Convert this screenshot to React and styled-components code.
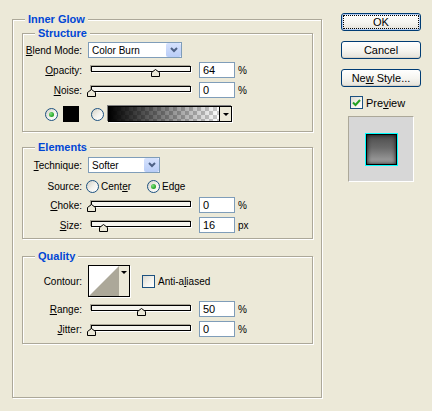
import styled, { createGlobalStyle } from 'styled-components';

const GlobalStyle = createGlobalStyle`
  html, body {
    margin: 0;
    background: #ece9d8;
  }
  body {
    font-family: "Liberation Sans", Arial, sans-serif;
    font-size: 10px;
    color: #000;
  }
`;

const Dialog = styled.div`
  display: flex;
  align-items: flex-start;
  width: 432px;
  height: 411px;
  box-sizing: border-box;
  padding: 13px 0 0 12px;
`;

const Group = styled.fieldset`
  margin: ${p => p.$mt || 0}px 0 0;
  padding: ${p => p.$pad};
  width: ${p => (p.$w ? `${p.$w}px` : 'auto')};
  height: ${p => (p.$h ? `${p.$h}px` : 'auto')};
  box-sizing: border-box;
  min-width: 0;
  border: 1px solid #aca899;
  box-shadow: inset 1px 1px 0 #fff, 1px 1px 0 #fff;
`;

const Legend = styled.legend`
  margin-left: ${p => p.$offset}px;
  padding: 0 3px;
  font-size: 11px;
  font-weight: bold;
  line-height: 13px;
  color: #0046d5;
  background: #ece9d8;
`;

const Row = styled.div`
  display: flex;
  align-items: ${p => p.$align || 'center'};
  height: ${p => p.$h || 16}px;
  margin-top: ${p => p.$gap || 0}px;
`;

const Label = styled.span`
  flex: none;
  width: 59px;
  margin-right: ${p => p.$gap ?? 6}px;
  text-align: right;
  white-space: nowrap;
`;

const Select = styled.div`
  display: flex;
  align-items: center;
  justify-content: space-between;
  width: ${p => p.$w}px;
  height: 16px;
  box-sizing: border-box;
  padding-left: 3px;
  border: 1px solid #7f9db9;
  background: #fff;
`;

const SelectButton = styled.span`
  display: flex;
  align-items: center;
  justify-content: center;
  width: 15px;
  height: 14px;
  border-radius: 2px;
  background: linear-gradient(#d6e2fd, #b9cdf7);
`;

const Slider = styled.div`
  position: relative;
  flex: none;
  width: 106px;
  height: 16px;
`;

const Track = styled.div`
  margin: 4px 3px 0;
  height: 6px;
  box-sizing: border-box;
  border: 1px solid #000;
  background: #f6f5ef;
  box-shadow: -1px -1px 0 #aca899, 1px 1px 0 #fff;
`;

const Thumb = styled.svg`
  position: absolute;
  top: 7px;
`;

const NumberInput = styled.input`
  width: 36px;
  height: 16px;
  box-sizing: border-box;
  margin: 0 0 0 5px;
  padding: 0 0 0 3px;
  border: 1px solid #7f9db9;
  background: #fff;
  font: 11px "Liberation Sans", Arial, sans-serif;
  color: #000;
  outline: none;
`;

const Unit = styled.span`
  margin-left: 3px;
`;

const Radio = styled.span`
  display: flex;
  align-items: center;
  justify-content: center;
  flex: none;
  width: 13px;
  height: 13px;
  box-sizing: border-box;
  margin-left: ${p => p.$ml || 0}px;
  border: 1px solid #1c5180;
  border-radius: 50%;
  background: linear-gradient(135deg, #d4d1c6, #f4f3ee 55%, #fff);

  &::after {
    content: '';
    width: 5px;
    height: 5px;
    border-radius: 50%;
    background: ${p => (p.$checked ? 'radial-gradient(circle at 35% 35%, #7fe07f, #21a121 70%)' : 'transparent')};
  }
`;

const OptionText = styled.span`
  margin-left: ${p => p.$ml ?? 2}px;
  font-size: ${p => p.$size || 10}px;
  white-space: nowrap;
`;

const CheckBox = styled.span`
  display: flex;
  align-items: center;
  justify-content: center;
  flex: none;
  width: 13px;
  height: 13px;
  box-sizing: border-box;
  margin-left: ${p => p.$ml || 0}px;
  border: 1px solid #1c5180;
  background: linear-gradient(135deg, #dcdad0, #f4f3ee 55%, #fff);
`;

const Swatch = styled.div`
  flex: none;
  width: 16px;
  height: 16px;
  margin-left: 5px;
  background: #000;
`;

const GradientBox = styled.div`
  display: flex;
  width: 124px;
  height: 16px;
  box-sizing: border-box;
  margin-left: 4px;
  border: 1px solid #000;
  box-shadow: -1px -1px 0 #808080, 1px 1px 0 #fff;
`;

const GradientFill = styled.div`
  flex: 1;
  background:
    linear-gradient(to right, #000, rgba(0, 0, 0, 0)),
    conic-gradient(#fff 25%, #cbcbcb 0 50%, #fff 0 75%, #cbcbcb 0) 0 0 / 8px 8px;
`;

const DropArrow = styled.div`
  display: flex;
  align-items: ${p => (p.$top ? 'flex-start' : 'center')};
  justify-content: center;
  width: ${p => p.$w || 12}px;
  padding-top: ${p => (p.$top ? 5 : 0)}px;
  box-sizing: border-box;
  border-left: ${p => (p.$line ? '1px solid #000' : 'none')};
  background: #ece9d8;

  &::after {
    content: '';
    border-left: 3px solid transparent;
    border-right: 3px solid transparent;
    border-top: 3px solid #000;
  }
`;

const ContourBox = styled.div`
  display: flex;
  width: 42px;
  height: 32px;
  box-sizing: border-box;
  border: 1px solid #000;
  box-shadow: 1px 1px 0 #fff;
`;

const Side = styled.div`
  display: flex;
  flex-direction: column;
  width: 80px;
  margin-left: 19px;
`;

const Button = styled.button`
  width: 80px;
  height: 18px;
  margin: ${p => p.$mt || 0}px 0 0;
  padding: 0;
  border: 1px solid #003c74;
  border-radius: 3px;
  background: linear-gradient(#fff, #f5f4ef 55%, #e4e2d9);
  box-shadow: ${p => (p.$default ? 'inset 0 0 0 1px #b4cdf3' : 'inset 0 -1px 0 #d6d0c5')};
  font: 11px "Liberation Sans", Arial, sans-serif;
  color: #000;
  outline: ${p => (p.$default ? '1px dotted #000' : 'none')};
  outline-offset: -3px;
`;

const PreviewRow = styled.div`
  display: flex;
  align-items: center;
  height: 13px;
  margin-top: 9px;
  padding-left: 9px;
`;

const PreviewBox = styled.div`
  display: flex;
  align-items: center;
  justify-content: center;
  width: 66px;
  height: 66px;
  box-sizing: border-box;
  margin: 7px 0 0 7px;
  border: 1px solid;
  border-color: #aca899 #fff #fff #aca899;
  background: #d7d7d7;
`;

const PreviewSwatch = styled.div`
  width: 33px;
  height: 33px;
  box-sizing: border-box;
  border: 1px solid #00ffff;
  background: linear-gradient(#4a4a4a, #6a6a6a 45%, #a9a9a9);
  box-shadow: inset 0 0 0 1px #000, inset 0 0 4px 1px #111;
`;

function Chevron() {
  return (
    <svg width="8" height="6" viewBox="0 0 8 6">
      <polyline points="1,1 4,4 7,1" fill="none" stroke="#4d6185" strokeWidth="2" />
    </svg>
  );
}

function Check() {
  return (
    <svg width="9" height="8" viewBox="0 0 9 8">
      <polyline points="1,3.5 3.5,6 8,1" fill="none" stroke="#21a121" strokeWidth="2" />
    </svg>
  );
}

function SliderField({ label, value, pos, unit = '%' }) {
  return (
    <>
      <Label>{label}</Label>
      <Slider>
        <Track />
        <Thumb width="9" height="8" viewBox="0 0 9 8" style={{ left: pos - 1.5 }}>
          <polygon points="4.5,0.5 8.5,3.5 8.5,7.5 0.5,7.5 0.5,3.5" fill="#ece9d8" stroke="#000" />
        </Thumb>
      </Slider>
      <NumberInput readOnly value={value} />
      <Unit>{unit}</Unit>
    </>
  );
}

export default function App() {
  return (
    <Dialog>
      <GlobalStyle />
      <Group $w={310} $h={385} $pad="1px 8px 0 9px">
        <Legend $offset={3}>Inner Glow</Legend>

        <Group $pad="2px 0 9px 0">
          <Legend $offset={12}>Structure</Legend>
          <Row>
            <Label><u>B</u>lend Mode:</Label>
            <Select $w={94}>
              Color Burn
              <SelectButton><Chevron /></SelectButton>
            </Select>
          </Row>
          <Row $gap={4}>
            <SliderField label={<><u>O</u>pacity:</>} value="64" pos={64} />
          </Row>
          <Row $gap={4}>
            <SliderField label={<><u>N</u>oise:</>} value="0" pos={0} />
          </Row>
          <Row $gap={8}>
            <Radio $ml={22} $checked />
            <Swatch />
            <Radio $ml={12} />
            <GradientBox>
              <GradientFill />
              <DropArrow $line />
            </GradientBox>
          </Row>
        </Group>

        <Group $mt={9} $pad="3px 0 5px 0">
          <Legend $offset={12}>Elements</Legend>
          <Row>
            <Label><u>T</u>echnique:</Label>
            <Select $w={72}>
              Softer
              <SelectButton><Chevron /></SelectButton>
            </Select>
          </Row>
          <Row $gap={6} $h={14}>
            <Label $gap={4}>Source:</Label>
            <Radio />
            <OptionText>Cent<u>e</u>r</OptionText>
            <Radio $ml={16} $checked />
            <OptionText>Edge</OptionText>
          </Row>
          <Row $gap={4}>
            <SliderField label={<><u>C</u>hoke:</>} value="0" pos={0} />
          </Row>
          <Row $gap={4}>
            <SliderField label={<><u>S</u>ize:</>} value="16" pos={12} unit="px" />
          </Row>
        </Group>

        <Group $mt={11} $pad="2px 0 6px 0">
          <Legend $offset={12}>Quality</Legend>
          <Row $h={32}>
            <Label>Contour:</Label>
            <ContourBox>
              <svg width="30" height="30" viewBox="0 0 30 30">
                <rect width="30" height="30" fill="#fff" />
                <polygon points="0,30 30,0 30,30" fill="#aca899" />
              </svg>
              <DropArrow $w={10} $top />
            </ContourBox>
            <CheckBox $ml={12} />
            <OptionText $ml={3}>Anti-a<u>l</u>iased</OptionText>
          </Row>
          <Row $gap={4}>
            <SliderField label={<><u>R</u>ange:</>} value="50" pos={50} />
          </Row>
          <Row $gap={4}>
            <SliderField label={<><u>J</u>itter:</>} value="0" pos={0} />
          </Row>
        </Group>
      </Group>

      <Side>
        <Button $default>OK</Button>
        <Button $mt={10}>Cancel</Button>
        <Button $mt={10}>Ne<u>w</u> Style...</Button>
        <PreviewRow>
          <CheckBox><Check /></CheckBox>
          <OptionText $ml={3} $size={11}>Pre<u>v</u>iew</OptionText>
        </PreviewRow>
        <PreviewBox>
          <PreviewSwatch />
        </PreviewBox>
      </Side>
    </Dialog>
  );
}
